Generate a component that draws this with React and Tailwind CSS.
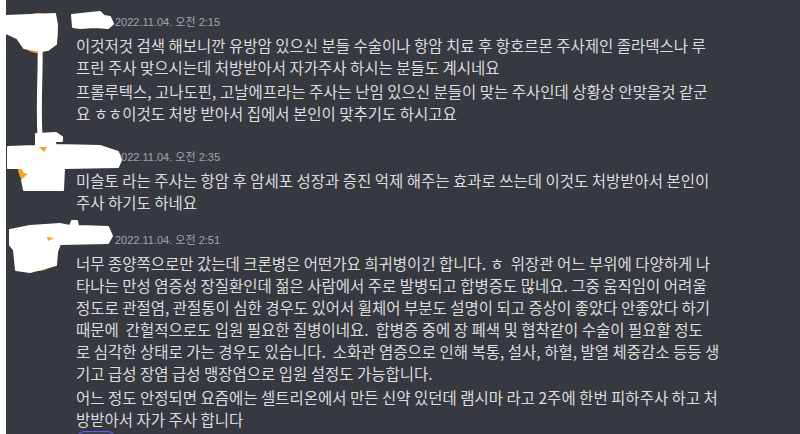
import React from "react";

const messages = [
  {
    time: "2022.11.04. 오전 2:15",
    gap: "mt-[11px]",
    paragraphs: [
      [
        "이것저것 검색 해보니깐 유방암 있으신 분들 수술이나 항암 치료 후 항호르몬 주사제인 졸라덱스나 루",
        "프린 주사 맞으시는데 처방받아서 자가주사 하시는 분들도 계시네요",
      ],
      [
        "프롤루텍스, 고나도핀, 고날에프라는 주사는 난임 있으신 분들이 맞는 주사인데 상황상 안맞을것 같군",
        "요 ㅎㅎ이것도 처방 받아서 집에서 본인이 맞추기도 하시고요",
      ],
    ],
  },
  {
    time: "2022.11.04. 오전 2:35",
    gap: "mt-[22px]",
    paragraphs: [
      [
        "미슬토 라는 주사는 항암 후 암세포 성장과 증진 억제 해주는 효과로 쓰는데 이것도 처방받아서 본인이",
        "주사 하기도 하네요",
      ],
    ],
  },
  {
    time: "2022.11.04. 오전 2:51",
    gap: "mt-[16px]",
    paragraphs: [
      [
        "너무 종양쪽으로만 갔는데 크론병은 어떤가요 희귀병이긴 합니다. ㅎ  위장관 어느 부위에 다양하게 나",
        "타나는 만성 염증성 장질환인데 젊은 사람에서 주로 발병되고 합병증도 많네요. 그중 움직임이 어려울",
        "정도로 관절염, 관절통이 심한 경우도 있어서 휠체어 부분도 설명이 되고 증상이 좋았다 안좋았다 하기",
        "때문에  간헐적으로도 입원 필요한 질병이네요.  합병증 중에 장 폐색 및 협착같이 수술이 필요할 정도",
        "로 심각한 상태로 가는 경우도 있습니다.  소화관 염증으로 인해 복통, 설사, 하혈, 발열 체중감소 등등 생",
        "기고 급성 장염 급성 맹장염으로 입원 설정도 가능합니다.",
      ],
      [
        "어느 정도 안정되면 요즘에는 셀트리온에서 만든 신약 있던데 램시마 라고 2주에 한번 피하주사 하고 처",
        "방받아서 자가 주사 합니다",
      ],
    ],
    reaction: true,
  },
];

function Message({ time, gap, paragraphs, reaction }) {
  return (
    <div className={`relative pl-[70px] ${gap}`}>
      {/* avatar (hidden under the scribbles) */}
      <div className="absolute left-[12px] top-[2px] h-10 w-10 rounded-full bg-[#f5a623]" />

      <div className="flex h-[22px] items-center pl-[39px]">
        <span className="font-['Liberation_Sans','Noto_Sans_CJK_KR',sans-serif] text-[11px] text-[#a3a6aa]">
          {time}
        </span>
      </div>

      <div className="mt-[1px] flex flex-col gap-[2px]">
        {paragraphs.map((lines, i) => (
          <div key={i}>
            {lines.map((l, j) => (
              <div key={j} className="h-[22px] whitespace-pre leading-[22px]">
                {l}
              </div>
            ))}
          </div>
        ))}
      </div>

      {reaction && (
        <div className="mt-[1px] h-6 w-[40px] rounded-lg border border-[#5865f2] bg-[#5865f2]/15" />
      )}
    </div>
  );
}

function Scribbles() {
  return (
    <svg
      className="pointer-events-none absolute left-0 top-0"
      width="130"
      height="290"
      viewBox="0 0 130 290"
    >
      <g fill="#fff" stroke="#fff" strokeWidth="2" strokeLinejoin="round">
        {/* first message */}
        <path d="M72,15 L90,13 L100,12 L104,16 L110,17 L113,24 L108,28 L95,27 L80,28 L73,27 Z" />
        <path d="M6,16 L55,14 L57,25 L56,44 L48,50 L36,50 L24,48 L17,38 L6,33 Z" />
        <path d="M36,134 L56,133 L62,137 L62,141 L36,141 Z" />
        {/* second message */}
        <path d="M8,147 L36,146 L36,141 L54,141 L56,145 L100,146 L118,152 L121,160 L118,167 L64,168 L63,190 L24,190 L22,180 L27,176 L22,168 L8,168 Z" />
        {/* third message */}
        <path d="M10,230 L30,226 L60,224 L70,226 L72,221 L77,221 L78,226 L108,227 L112,236 L108,243 L60,244 L57,252 L56,265 L45,268 L30,272 L16,270 L14,250 L10,245 Z" />
      </g>
      <path
        d="M40,46 C41,70 38,100 40,137"
        fill="none"
        stroke="#fff"
        strokeWidth="5"
        strokeLinecap="round"
      />
      <g fill="#f5a623">
        <path d="M39,147 L47,147 L44,152 Z" />
        <path d="M19,172 L28,174 L22,178 Z" />
        <path d="M47,237 L54,238 L48,241 Z" />
      </g>
    </svg>
  );
}

export default function App() {
  return (
    <div className="relative flex h-[434px] w-[800px] overflow-hidden bg-[#36393f]">
      <div className="w-[6px] shrink-0 bg-white" />
      <div className="flex-1 font-['Noto_Sans_CJK_KR','Noto_Sans',sans-serif] text-[15.5px] text-[#dcddde]">
        {messages.map((m, i) => (
          <Message key={i} {...m} />
        ))}
      </div>
      <Scribbles />
    </div>
  );
}
